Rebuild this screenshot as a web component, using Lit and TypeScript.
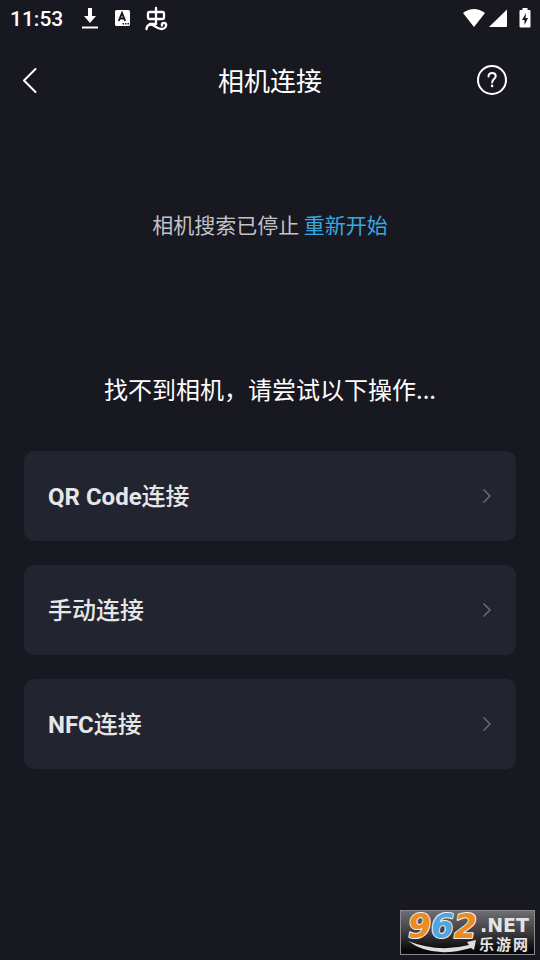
import { LitElement, html, css } from "lit";
import { customElement, property } from "lit/decorators.js";

@customElement("status-bar")
class StatusBar extends LitElement {
  static styles = css`
    :host {
      display: flex;
      align-items: center;
      height: 36px;
      padding: 0 9px 0 10px;
      font: 500 21px/24px Roboto, "Noto Sans CJK SC", sans-serif;
      color: #fff;
    }
    .time { margin-right: 18px; padding-top: 2px; }
    .left { display: flex; align-items: center; gap: 14px; flex: 1; }
    .right { display: flex; align-items: center; gap: 4px; }
    .battery { margin-left: 8px; }
    svg { display: block; }
  `;
  render() {
    return html`
      <span class="time">11:53</span>
      <div class="left">
        <svg width="18" height="22" viewBox="0 0 18 22" fill="#fff" aria-hidden="true">
          <path d="M7 1h4v8h4l-6 7-6-7h4zM1 19.500h16v2H1z" />
        </svg>
        <svg width="18" height="22" viewBox="0 0 18 22" aria-hidden="true">
          <rect x="2" y="3" width="15" height="16" rx="1.500" fill="#fff" />
          <path d="M5.800 14L9 6L12.200 14M7 11.500h4" fill="none" stroke="#17181f" stroke-width="1.900" />
          <path d="M9.500 16H11v1.500H9.500zM12 16h1.500v1.500H12zM14.500 16H16v1.500h-1.500z" fill="#17181f" />
        </svg>
        <svg width="24" height="26" viewBox="0 0 24 26" fill="none" stroke="#fff" stroke-width="2.300"
          stroke-linecap="round" stroke-linejoin="round" aria-hidden="true">
          <path d="M11 3v16M4.500 7H17.500q1.500 0 1.500 1.500v4q0 1.500-1.500 1.500H4.500q-1.500 0-1.500-1.500V8.500q0-1.500 1.500-1.500z" />
          <path d="M1.500 24q.5-4.500 4.500-4.500C9.500 19.500 11 24 16.500 24c5 0 6-6 3-6q-3.500 0-2.500 2.500M5 19h6" />
        </svg>
      </div>
      <div class="right">
        <svg width="22" height="20" viewBox="0 0 22 20" fill="#fff" aria-hidden="true">
          <path d="M0 5Q11-3 22 5L11 19z" />
        </svg>
        <svg width="18" height="20" viewBox="0 0 18 20" fill="#fff" aria-hidden="true">
          <path d="M18 1.500V18q0 1-1 1H0z" />
        </svg>
        <svg class="battery" width="12" height="20" viewBox="0 0 12 20" aria-hidden="true">
          <path d="M3.500 0h5v2H10.500q1 0 1 1v15.500q0 1-1 1h-9q-1 0-1-1V3q0-1 1-1h2z" fill="#fff" />
          <path d="M7 5L3 12h2.500v5L9 10H6.500z" fill="#17181f" />
        </svg>
      </div>
    `;
  }
}

@customElement("option-card")
class OptionCard extends LitElement {
  @property() latin = "";
  @property() label = "";
  static styles = css`
    :host { display: block; }
    .card {
      display: flex;
      align-items: center;
      justify-content: space-between;
      width: 100%;
      min-height: 90px;
      padding: 0 24px;
      border: 0;
      border-radius: 10px;
      background: #222430;
      color: #e6e6e8;
      font: 500 24px/36px "Noto Sans CJK SC", sans-serif;
      text-align: left;
      cursor: pointer;
    }
    .latin { font-family: Roboto, sans-serif; font-weight: 700; }
    svg { display: block; }
  `;
  render() {
    return html`
      <button class="card" type="button">
        <span><span class="latin">${this.latin}</span>${this.label}</span>
        <svg width="10" height="16" viewBox="0 0 10 16" fill="none" stroke="#656771" stroke-width="1.700"
          stroke-linecap="round" stroke-linejoin="round" aria-hidden="true">
          <path d="M2 2l6 6-6 6" />
        </svg>
      </button>
    `;
  }
}

@customElement("site-mark")
class SiteMark extends LitElement {
  static styles = css`
    :host { display: block; }
    svg { display: block; overflow: visible; }
    .digits {
      font: italic 700 33px "DejaVu Sans", sans-serif;
      stroke: #f4f1ec;
      stroke-width: 2px;
      paint-order: stroke;
      stroke-linejoin: round;
    }
    .orange { fill: #ee8a22; }
    .blue { fill: #4fa5dc; }
    .net { font: 700 19px "DejaVu Sans", sans-serif; fill: #e4e4e4; }
    .name { font: 700 15px "Noto Sans CJK SC", sans-serif; fill: #e4e4e4; }
  `;
  render() {
    return html`
      <svg width="135" height="45" viewBox="0 0 135 45" role="img" aria-label="962.NET 乐游网">
        <defs>
          <linearGradient id="plate" x1="0" y1="0" x2="0" y2="1">
            <stop offset="0" stop-color="#707074" />
            <stop offset="0.500" stop-color="#3c3c40" />
            <stop offset="0.900" stop-color="#08080a" />
          </linearGradient>
        </defs>
        <rect x="0.500" y="0.500" width="134" height="44" fill="url(#plate)" stroke="#8b8b8f" />
        <text class="digits" x="8" y="28"><tspan class="orange">9</tspan><tspan class="blue">6</tspan><tspan class="orange">2</tspan></text>
        <path d="M8 31Q38 43 69 35l-2-3 9-2-2 10-3-2Q32 49 8 31z" fill="#dededf" />
        <text class="net" x="80" y="22">.NET</text>
        <text class="name" x="79" y="40">乐</text>
        <text class="name" x="96" y="40">游</text>
        <text class="name" x="113" y="40">网</text>
      </svg>
    `;
  }
}

@customElement("app-root")
class AppRoot extends LitElement {
  static styles = css`
    :host {
      display: flex;
      flex-direction: column;
      box-sizing: border-box;
      min-height: 100vh;
      background: #181820;
      color: #fff;
      font-family: "Noto Sans CJK SC", sans-serif;
    }
    .bar {
      display: grid;
      grid-template-columns: 48px 1fr 48px;
      align-items: center;
      height: 88px;
      padding: 0 24px 0 12px;
    }
    .title { margin: 0; padding-left: 12px; font-size: 26px; line-height: 40px; font-weight: 400; text-align: center; }
    .icon {
      display: flex;
      align-items: center;
      justify-content: center;
      height: 48px;
      padding: 0;
      border: 0;
      background: none;
      color: #fff;
      cursor: pointer;
    }
    .back { justify-content: flex-start; padding-left: 10px; }
    .search {
      margin: 84px 0 0;
      text-align: center;
      font-size: 21px;
      line-height: 32px;
      color: #c2c2c7;
    }
    .search a { color: #38a9e0; text-decoration: none; }
    .hint {
      margin: 131px 0 0;
      text-align: center;
      font-size: 24px;
      line-height: 36px;
      font-weight: 400;
    }
    .list {
      display: flex;
      flex-direction: column;
      gap: 24px;
      margin: 0;
      padding: 44px 24px 24px;
      list-style: none;
    }
    .foot { display: flex; justify-content: flex-end; margin-top: auto; padding: 0 5px 5px 0; }
  `;
  render() {
    return html`
      <status-bar></status-bar>
      <header class="bar">
        <button class="icon back" type="button" aria-label="返回">
          <svg width="16" height="26" viewBox="0 0 16 26" fill="none" stroke="currentColor" stroke-width="2"
            stroke-linecap="round" stroke-linejoin="round"><path d="M13.500 2L2 13.500 13.500 25" /></svg>
        </button>
        <h1 class="title">相机连接</h1>
        <button class="icon" type="button" aria-label="帮助">
          <svg width="32" height="32" viewBox="0 0 32 32" fill="none" stroke="currentColor" stroke-width="2"
            stroke-linecap="round" stroke-linejoin="round">
            <circle cx="16" cy="16" r="14" />
            <path d="M12.500 12.500c0-2 1.300-3.500 3.600-3.500s3.600 1.400 3.600 3.200c0 2.800-3.600 3-3.600 6.300" />
            <circle cx="16.100" cy="21.900" r="1.300" fill="currentColor" stroke="none" />
          </svg>
        </button>
      </header>
      <main>
        <p class="search">相机搜索已停止 <a href="#">重新开始</a></p>
        <h2 class="hint">找不到相机，请尝试以下操作...</h2>
        <ul class="list">
          <li><option-card latin="QR Code" label="连接"></option-card></li>
          <li><option-card label="手动连接"></option-card></li>
          <li><option-card latin="NFC" label="连接"></option-card></li>
        </ul>
      </main>
      <footer class="foot"><site-mark></site-mark></footer>
    `;
  }
}
